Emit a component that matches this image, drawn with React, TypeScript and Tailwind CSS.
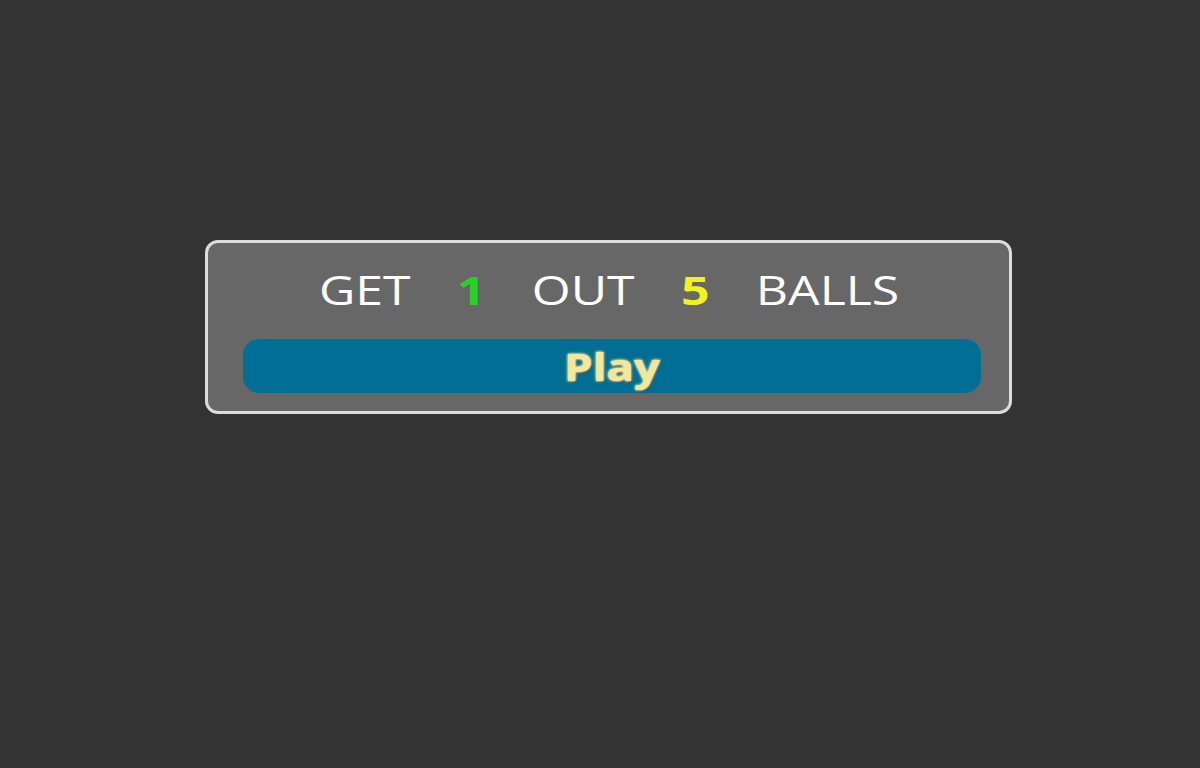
import React from 'react';

const App: React.FC = () => {
  return (
    <div className="w-[1200px] h-[768px] bg-[#333333] pt-[240px] pl-[205px]" style={{ fontFamily: '"Open Sans", "DejaVu Sans", sans-serif' }}>
      <div className="w-[807px] h-[174px] rounded-[13px] border-[3px] border-[#dcdcdc] bg-[#676767] pl-[35px] pr-[28px] flex flex-col">
        {/* Goal line */}
        <div className="h-[96px] flex items-center justify-center pb-[2px] pr-[6px]">
          <div className="flex items-center gap-[37px] text-[40px] text-white scale-x-[1.25]">
            <span>GET</span>
            <span className="font-bold text-[#25d325]">1</span>
            <span>OUT</span>
            <span className="font-bold text-[#f2f21e]">5</span>
            <span>BALLS</span>
          </div>
        </div>
        {/* Play button */}
        <button className="h-[54px] w-full rounded-[16px] bg-[#006e95] flex items-center justify-center">
          <span
            className="text-[38px] font-bold text-[#f2e79a] leading-none scale-x-[1.2]"
            style={{ textShadow: '0 0 2px #fff8c0, 0 0 3px #eaf2a0, 1px 2px 2px #2a3a40' }}
          >
            Play
          </span>
        </button>
      </div>
    </div>
  );
};

export default App;
